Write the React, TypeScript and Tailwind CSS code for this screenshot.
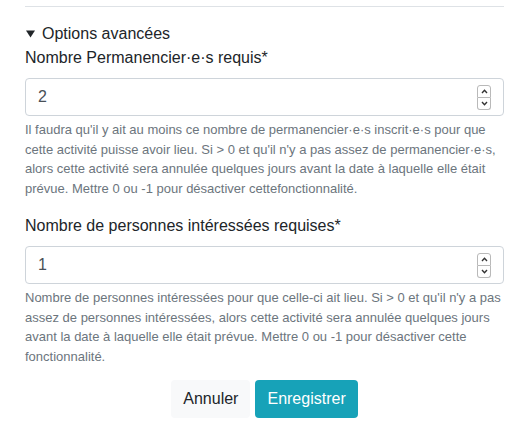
import React from "react";

function Spinner() {
  return (
    <div className="flex flex-col w-[14px] h-[25px]">
      <div className="flex-1 border border-[#b9b9b9] rounded-t-[3px] flex items-center justify-center bg-white">
        <svg width="7" height="5" viewBox="0 0 7 5">
          <path d="M1 4 L3.5 1.3 L6 4" fill="none" stroke="#333" strokeWidth="1.4" />
        </svg>
      </div>
      <div className="flex-1 border border-t-0 border-[#b9b9b9] rounded-b-[3px] flex items-center justify-center bg-white">
        <svg width="7" height="5" viewBox="0 0 7 5">
          <path d="M1 1 L3.5 3.7 L6 1" fill="none" stroke="#333" strokeWidth="1.4" />
        </svg>
      </div>
    </div>
  );
}

function NumberField({ value }: { value: string }) {
  return (
    <div className="h-[38px] border border-[#ced4da] rounded-[4px] bg-white flex items-center pl-3 pr-[12px] text-[16px] text-[#495057]">
      <span className="flex-1">{value}</span>
      <Spinner />
    </div>
  );
}

export default function App() {
  return (
    <div
      className="w-[529px] h-[430px] bg-white px-[25px] overflow-hidden"
      style={{ fontFamily: '"Liberation Sans", Arial, sans-serif' }}
    >
      <div className="pt-[6px]">
        <div className="border-t border-[#dee2e6]" />
      </div>
      <div className="pt-[15px] text-[16px] leading-[24px] text-[#212529]">
        <div className="flex items-center">
          <svg width="9" height="8" viewBox="0 0 9 8" className="ml-[1px] mr-[7px]">
            <path d="M0 0.5 L9 0.5 L4.5 7.5 Z" fill="#212529" />
          </svg>
          <span>Options avancées</span>
        </div>
        <div className="mb-4">
          <div className="mb-2">Nombre Permanencier·e·s requis*</div>
          <NumberField value="2" />
          <div className="mt-1 text-[13px] leading-[19.5px] text-[#6c757d]">
            Il faudra qu'il y ait au moins ce nombre de permanencier·e·s inscrit·e·s pour que cette activité puisse avoir lieu. Si &gt; 0 et qu'il n'y a pas assez de permanencier·e·s, alors cette activité sera annulée quelques jours avant la date à laquelle elle était prévue. Mettre 0 ou -1 pour désactiver cettefonctionnalité.
          </div>
        </div>
        <div>
          <div className="mb-2">Nombre de personnes intéressées requises*</div>
          <NumberField value="1" />
          <div className="mt-1 text-[13px] leading-[19.5px] text-[#6c757d]">
            Nombre de personnes intéressées pour que celle-ci ait lieu. Si &gt; 0 et qu'il n'y a pas assez de personnes intéressées, alors cette activité sera annulée quelques jours avant la date à laquelle elle était prévue. Mettre 0 ou -1 pour désactiver cette fonctionnalité.
          </div>
        </div>
        <div className="flex justify-center gap-[5px] mt-[14px]">
          <button className="h-[38px] px-3 rounded-[4px] bg-[#f8f9fa] text-[#212529] text-[16px]">
            Annuler
          </button>
          <button className="h-[38px] px-3 rounded-[4px] bg-[#17a2b8] text-white text-[16px]">
            Enregistrer
          </button>
        </div>
      </div>
    </div>
  );
}
